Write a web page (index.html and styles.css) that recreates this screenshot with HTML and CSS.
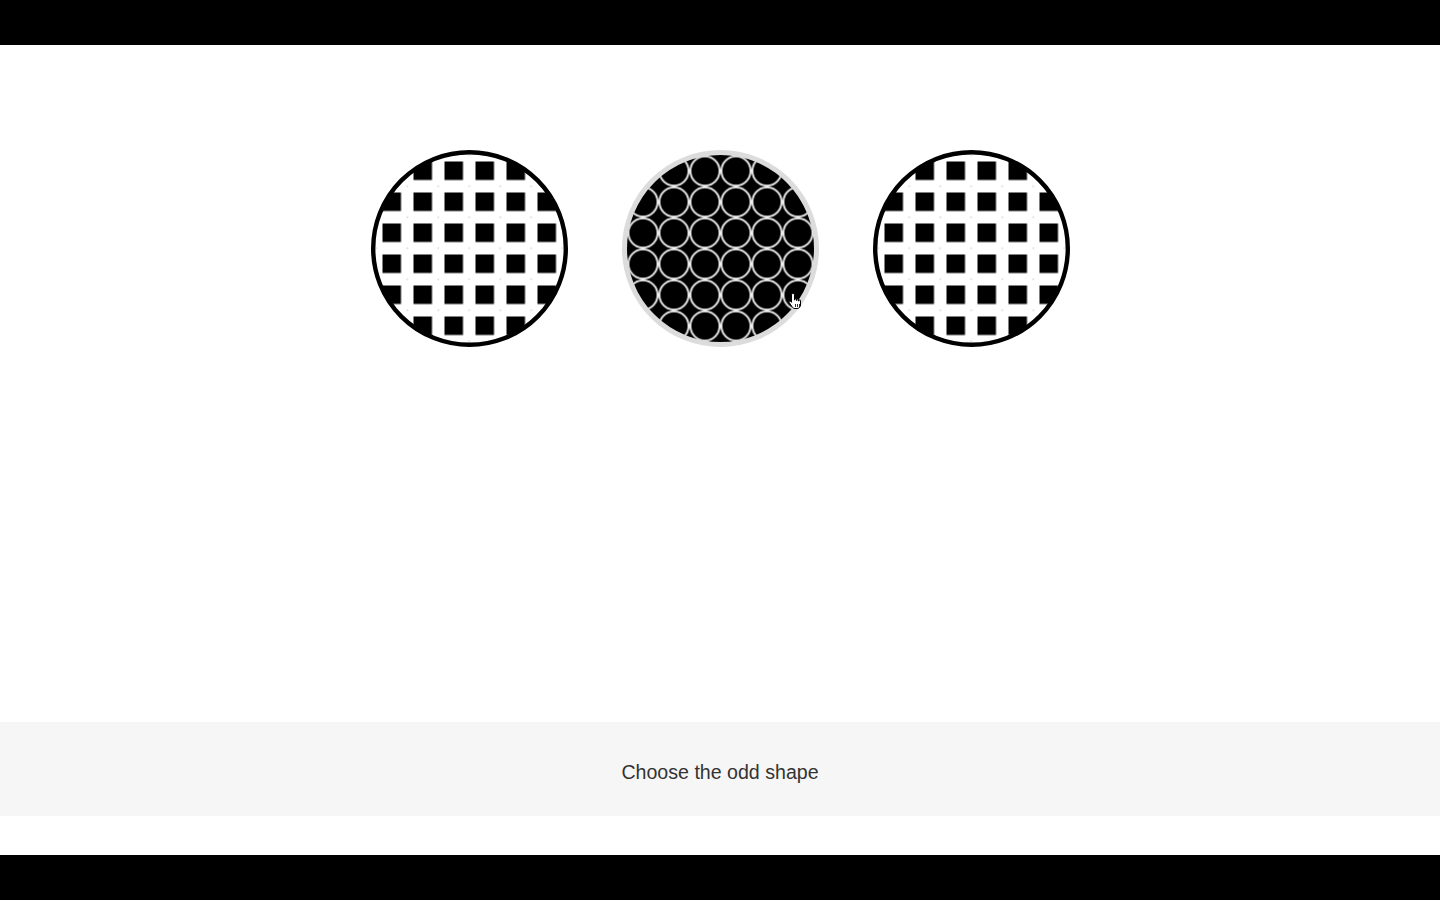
FILE: index.html
```html
<!DOCTYPE html>
<html lang="en">
<head>
<meta charset="utf-8">
<title>Choose the odd shape</title>
<link rel="stylesheet" href="styles.css">
</head>
<body>
<div class="bar"></div>
<main class="stage">
  <div class="shapes">
    <div class="shape">
      <svg width="197" height="197" viewBox="0 0 197 197">
        <defs>
          <pattern id="sqA" patternUnits="userSpaceOnUse" x="11.5" y="11.5" width="31" height="31">
            <rect width="18.5" height="18.5" fill="#000"/>
            <circle cx="24.75" cy="24.75" r="0.8" fill="#c4c4c4"/>
          </pattern>
        </defs>
        <circle cx="98.5" cy="98.5" r="96.5" fill="#fff"/>
        <circle cx="98.5" cy="98.5" r="96.5" fill="url(#sqA)"/>
        <circle cx="98.5" cy="98.5" r="96.3" fill="none" stroke="#000" stroke-width="4.4"/>
      </svg>
    </div>
    <div class="shape">
      <svg width="197" height="197" viewBox="0 0 197 197">
        <defs>
          <pattern id="ring" patternUnits="userSpaceOnUse" x="5.5" y="5.5" width="31" height="31">
            <circle cx="15.5" cy="15.5" r="14.6" fill="none" stroke="#f2f2f2" stroke-width="1.9"/>
          </pattern>
        </defs>
        <circle cx="98.5" cy="98.5" r="96" fill="#000"/>
        <circle cx="98.5" cy="98.5" r="96" fill="url(#ring)"/>
        <circle cx="98.5" cy="98.5" r="96" fill="none" stroke="#dcdcdc" stroke-width="5"/>
      </svg>
      <svg class="cursor" width="16" height="19" viewBox="0 0 16 19">
        <path d="M6 1.5c0.8 0 1.5 0.7 1.5 1.5V8h0.5V7c0-0.8 1.5-0.8 1.5 0v1.5h0.5v-1c0-0.8 1.5-0.8 1.5 0V9h0.5v-0.5c0-0.8 1.5-0.8 1.5 0V13c0 2-1.5 3.5-3.5 3.5H8c-1.5 0-2.3-0.8-3-1.8L2.2 10.5c-0.5-0.8 0.5-1.8 1.3-1.2l1 1V3c0-0.8 0.7-1.5 1.5-1.5z" fill="#fff" stroke="#000" stroke-width="1"/>
        <path d="M8.5 12v3M10.5 12v3M12.5 12v3" stroke="#000" stroke-width="0.8"/>
      </svg>
    </div>
    <div class="shape">
      <svg width="197" height="197" viewBox="0 0 197 197">
        <defs>
          <pattern id="sqB" patternUnits="userSpaceOnUse" x="11.5" y="11.5" width="31" height="31">
            <rect width="18.5" height="18.5" fill="#000"/>
            <circle cx="24.75" cy="24.75" r="0.8" fill="#c4c4c4"/>
          </pattern>
        </defs>
        <circle cx="98.5" cy="98.5" r="96.5" fill="#fff"/>
        <circle cx="98.5" cy="98.5" r="96.5" fill="url(#sqB)"/>
        <circle cx="98.5" cy="98.5" r="96.3" fill="none" stroke="#000" stroke-width="4.4"/>
      </svg>
    </div>
  </div>
</main>
<footer class="prompt">Choose the odd shape</footer>
<div class="gap"></div>
<div class="bar"></div>
</body>
</html>
```

FILE: styles.css
```css
html, body {
  margin: 0;
  padding: 0;
  background: #fff;
}
body {
  width: 1440px;
  height: 900px;
  overflow: hidden;
  font-family: "Liberation Sans", Arial, sans-serif;
}
.bar {
  height: 45px;
  background: #000;
}
.stage {
  height: 677px;
  box-sizing: border-box;
  padding-top: 105px;
  background: #fff;
}
.shapes {
  display: flex;
  justify-content: center;
  gap: 54px;
}
.shape {
  position: relative;
  width: 197px;
  height: 197px;
}
.shape svg {
  display: block;
}
.cursor {
  position: absolute;
  left: 165px;
  top: 142px;
}
.prompt {
  height: 94px;
  box-sizing: border-box;
  padding-top: 39px;
  background: #f6f6f6;
  color: #333;
  font-size: 19.6px;
  line-height: 22px;
  text-align: center;
}
.gap {
  height: 39px;
  background: #fff;
}
```
